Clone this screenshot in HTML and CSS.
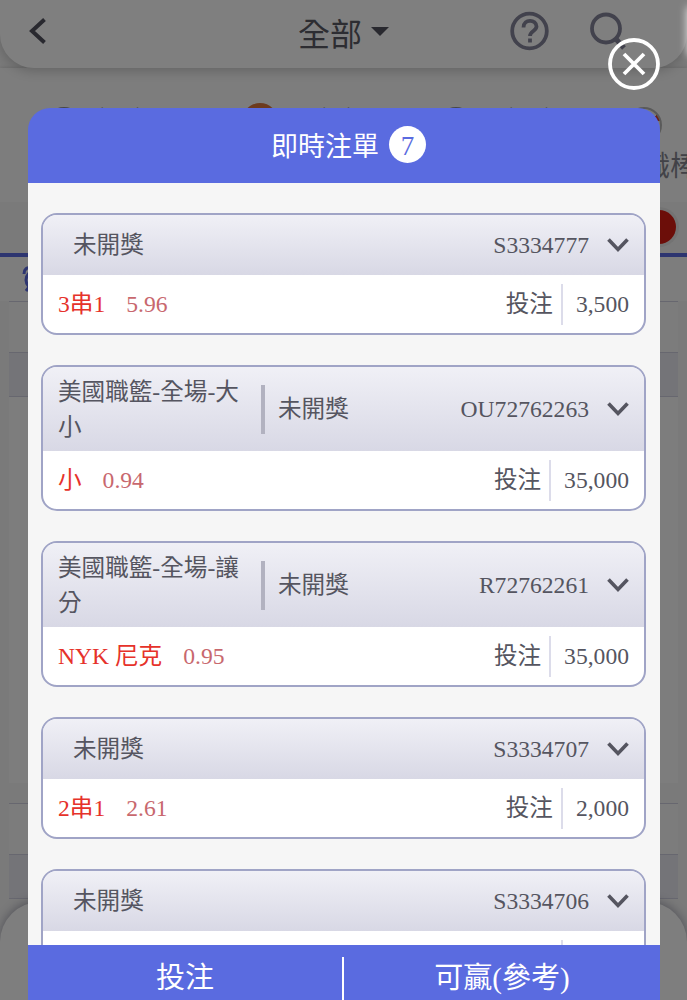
FILE: index.html
```
<!DOCTYPE html>
<html lang="zh-Hant">
<head>
  <meta charset="UTF-8">
  <meta name="viewport" content="width=device-width, initial-scale=1.0">
  <title>即時注單</title>
  <link rel="stylesheet" href="styles.css">
</head>
<body>
  <!-- Page behind the popup -->
  <div class="page">
    <header class="topbar">
      <svg class="back" viewBox="0 0 18 28"><path d="M15.500 2.500 3 14l12.500 11.500"/></svg>
      <div class="page-title">全部<span class="caret"></span></div>
      <div class="tools">
        <svg class="help" viewBox="0 0 40 40">
          <circle cx="19.500" cy="20" r="17.300"/>
          <path d="M13.500 16.500c0-9 13-8.500 13-1 0 4.500-6.500 4.500-6.500 9.500"/>
          <path d="M20 27.500v4"/>
        </svg>
        <svg class="search" viewBox="0 0 40 40">
          <circle cx="17" cy="17.500" r="14"/>
          <path stroke-width="5" d="m27 28 8 9"/>
        </svg>
      </div>
    </header>
    <nav class="sports">
      <div class="sport"><i class="ball soccer"></i><span>(642)</span></div>
      <div class="sport wide"><i class="ball basketball"></i><span>(42)</span></div>
      <div class="sport mid"><i class="ball soccer"></i><span>(222)</span></div>
      <div class="sport"><i class="ball baseball"></i><b>職棒</b></div>
    </nav>
    <div class="filter"><i class="dot"></i></div>
    <div class="alarm-row">
      <svg class="alarm" viewBox="0 0 24 28"><circle cx="13" cy="15" r="9"/><path d="M2 9c0-5 3-7 7-6M17 3c4-1 6 2 6 6M7 22l-3 4"/></svg>
    </div>
    <div class="games">
      <div class="league"></div>
      <div class="subhead"></div>
      <div class="match"></div>
      <div class="league second"></div>
      <div class="subhead"></div>
    </div>
    <div class="bottom-nav"></div>
  </div>

  <div class="overlay">
    <div class="popup">
      <button class="close" aria-label="close">
        <svg viewBox="0 0 52 52"><circle cx="26" cy="26" r="24"/><path d="m16 16 20 20M36 16 16 36"/></svg>
      </button>
      <div class="popup-head"><span class="popup-title">即時注單</span><span class="count">7</span></div>

      <div class="popup-body">
        <div class="ticket">
          <div class="ticket-head">
            <span class="status">未開獎</span>
            <span class="number">S3334777</span>
            <svg class="arrow" viewBox="0 0 24 16"><path d="m2.500 2.500 9.500 10 9.500-10"/></svg>
          </div>
          <div class="ticket-row">
            <span class="pick">3串1</span><span class="odds">5.96</span>
            <span class="label">投注</span><span class="stake">3,500</span>
          </div>
        </div>

        <div class="ticket">
          <div class="ticket-head tall">
            <span class="game">美國職籃-全場-大小</span>
            <span class="status">未開獎</span>
            <span class="number">OU72762263</span>
            <svg class="arrow" viewBox="0 0 24 16"><path d="m2.500 2.500 9.500 10 9.500-10"/></svg>
          </div>
          <div class="ticket-row">
            <span class="pick">小</span><span class="odds">0.94</span>
            <span class="label">投注</span><span class="stake">35,000</span>
          </div>
        </div>

        <div class="ticket">
          <div class="ticket-head tall">
            <span class="game">美國職籃-全場-讓分</span>
            <span class="status">未開獎</span>
            <span class="number">R72762261</span>
            <svg class="arrow" viewBox="0 0 24 16"><path d="m2.500 2.500 9.500 10 9.500-10"/></svg>
          </div>
          <div class="ticket-row">
            <span class="pick">NYK 尼克</span><span class="odds">0.95</span>
            <span class="label">投注</span><span class="stake">35,000</span>
          </div>
        </div>

        <div class="ticket">
          <div class="ticket-head">
            <span class="status">未開獎</span>
            <span class="number">S3334707</span>
            <svg class="arrow" viewBox="0 0 24 16"><path d="m2.500 2.500 9.500 10 9.500-10"/></svg>
          </div>
          <div class="ticket-row">
            <span class="pick">2串1</span><span class="odds">2.61</span>
            <span class="label">投注</span><span class="stake">2,000</span>
          </div>
        </div>

        <div class="ticket">
          <div class="ticket-head">
            <span class="status">未開獎</span>
            <span class="number">S3334706</span>
            <svg class="arrow" viewBox="0 0 24 16"><path d="m2.500 2.500 9.500 10 9.500-10"/></svg>
          </div>
          <div class="ticket-row">
            <span class="label"></span><span class="stake"></span>
          </div>
        </div>
      </div>

      <div class="popup-foot">
        <div class="foot-bet">投注</div>
        <div class="foot-win">可贏(參考)</div>
      </div>
    </div>
  </div>
</body>
</html>
```

FILE: styles.css
```
* {
  box-sizing: border-box;
}

body {
  margin: 0;
  height: 1000px;
  overflow: hidden;
  position: relative;
  font-family: "Liberation Serif", "Noto Sans CJK TC", serif;
  font-size: 23.6px;
  color: #555560;
}

svg {
  display: block;
  fill: none;
  stroke: currentColor;
}

/* page */
.page {
  height: 1000px;
  background: #f4f4f4;
  overflow: hidden;
  position: relative;
}

/* light edge at the top right */
.page::after {
  content: "";
  position: absolute;
  z-index: 1;
  top: 8px;
  right: -9px;
  width: 8px;
  height: 46px;
  box-shadow: 0 0 8px 1px rgba(255, 255, 255, 0.8);
}

.topbar {
  position: relative;
  display: flex;
  align-items: center;
  height: 68px;
  padding: 0 58px 6px 29px;
  background: #fff;
  border-radius: 0 0 34px 34px;
  box-shadow: 0 3px 12px rgba(0, 0, 0, 0.2);
}

.back {
  width: 18px;
  height: 28px;
  color: #52525f;
  stroke-width: 4;
}

.page-title {
  display: flex;
  align-items: center;
  height: 40px;
  margin-left: 251px;
  padding-top: 7px;
  font-size: 32px;
  line-height: 46px;
  color: #5a5a64;
}

.caret {
  margin: -6px 0 0 9px;
  border: 9px solid transparent;
  border-top-color: #52525f;
  border-bottom: 0;
}

.tools {
  display: flex;
  margin-left: auto;
  gap: 39px;
  color: #85859a;
}

.tools svg {
  width: 40px;
  height: 40px;
  stroke-width: 3.8;
}

.sports {
  display: flex;
  height: 134px;
  padding-top: 36px;
  background: #fafafa;
  box-shadow: 0 1px 5px rgba(0, 0, 0, 0.25);
}

.sport {
  position: relative;
  flex: 0 0 196px;
  height: 98px;
  padding: 0 0 0 96px;
  font-size: 22px;
  line-height: 22px;
  white-space: nowrap;
}

.wide {
  padding-left: 122px;
}

.mid {
  padding-left: 113px;
}

.ball {
  position: absolute;
  top: -1px;
  left: 46px;
  width: 36px;
  height: 36px;
  border-radius: 50%;
}

.soccer {
  top: 3px;
  background: #8a8a94;
}

.basketball {
  background: #d8743c;
}

.baseball {
  top: 3px;
  left: 38px;
  background: radial-gradient(circle at 30px 9px, #d8442c 3px, #f4f4f4 3.5px);
  border: 2px solid #b4b4b4;
}

.sport b {
  position: absolute;
  top: 52px;
  left: 54px;
  font-size: 28px;
  font-weight: normal;
  color: #85858f;
}

.filter {
  display: flex;
  justify-content: flex-end;
  height: 55px;
  padding: 8px 11px 0 0;
  background: #f4f4f4;
  border-bottom: 4px solid #5b6be0;
}

.dot {
  width: 34px;
  height: 34px;
  border-radius: 50%;
  background: #d81c12;
  box-shadow: 0 0 0 3px #e6e6e6;
}

.alarm-row {
  height: 44px;
  padding: 8px 0 0 22px;
  background: #fafafa;
}

.alarm {
  width: 24px;
  height: 28px;
  color: #5b6be0;
  stroke-width: 3;
}

.games {
  margin: 0 9px;
}

.league {
  height: 52px;
  background: #f9f9f9;
  border: 1px solid #cfcfdf;
  border-width: 1px 0;
}

.subhead {
  height: 44px;
  background: #e8e8f0;
  border-bottom: 1px solid #cfcfdf;
}

.match {
  height: 386px;
  background: #fafafa;
}

.second {
  margin-top: 20px;
}

.bottom-nav {
  position: absolute;
  left: 0;
  right: 0;
  bottom: 0;
  height: 98px;
  background: #fdfdfd;
  border-radius: 40px 40px 0 0;
  box-shadow: 0 -2px 10px rgba(60, 60, 90, 0.4);
}

/* popup */
.overlay {
  position: absolute;
  inset: 0;
  padding: 108px 27px 0 28px;
  background: rgba(0, 0, 0, 0.5);
}

.popup {
  position: relative;
  display: flex;
  flex-direction: column;
  height: 892px;
}

.close {
  position: absolute;
  top: -70px;
  right: 0;
  width: 52px;
  height: 52px;
  padding: 0;
  border: 0;
  background: none;
  color: #fff;
}

.close svg {
  stroke-width: 3.8;
}

.popup-head {
  display: flex;
  flex: none;
  align-items: center;
  justify-content: center;
  height: 75px;
  padding: 0 0 3px 9px;
  font-size: 27px;
  line-height: 40px;
  color: #fff;
  background: #5a6be0;
  border-radius: 22px 22px 0 0;
}

.popup-title {
  padding-top: 6px;
}

.count {
  width: 37px;
  height: 37px;
  margin-left: 10px;
  line-height: 41px;
  text-align: center;
  color: #5a6be0;
  background: #fff;
  border-radius: 50%;
}

.popup-body {
  flex: 1;
  min-height: 0;
  overflow: hidden;
  padding: 30px 14px 0 13px;
  background: #f6f6f6;
}

.ticket {
  margin-bottom: 30px;
  overflow: hidden;
  background: #fff;
  border: 2px solid #a0a4c6;
  border-radius: 16px;
}

.ticket-head {
  display: flex;
  align-items: center;
  height: 60px;
  padding: 0 14px 0 15px;
  line-height: 41px;
  background: linear-gradient(#f0f0f6, #d8d8e5);
}

.tall {
  height: 84px;
}

.game {
  width: 190px;
  padding-top: 2px;
  line-height: 35px;
}

.status {
  padding-left: 15px;
}

.tall .status {
  margin-left: 13px;
  height: 49px;
  line-height: 49px;
  padding-left: 13px;
  border-left: 4px solid #b2b2c0;
}

.number {
  margin-left: auto;
}

.arrow {
  width: 24px;
  height: 16px;
  margin-left: 17px;
  stroke-width: 3.6;
}

.ticket-row {
  display: flex;
  align-items: center;
  height: 58px;
  padding: 0 15px 0 15px;
  line-height: 41px;
}

.pick {
  color: #e6322a;
}

.odds {
  margin-left: 21px;
  color: #c8686e;
}

.label {
  margin-left: auto;
}

.stake {
  min-width: 68px;
  height: 41px;
  margin-left: 8px;
  padding-left: 13px;
  border-left: 2px solid #dcdcea;
}

.popup-foot {
  display: flex;
  flex: none;
  height: 55px;
  padding-top: 12px;
  font-size: 29px;
  line-height: 42px;
  text-align: center;
  color: #fff;
  background: #5a6be0;
}

.foot-bet {
  width: 314px;
}

.foot-win {
  flex: 1;
  border-left: 2px solid #fff;
}
```
